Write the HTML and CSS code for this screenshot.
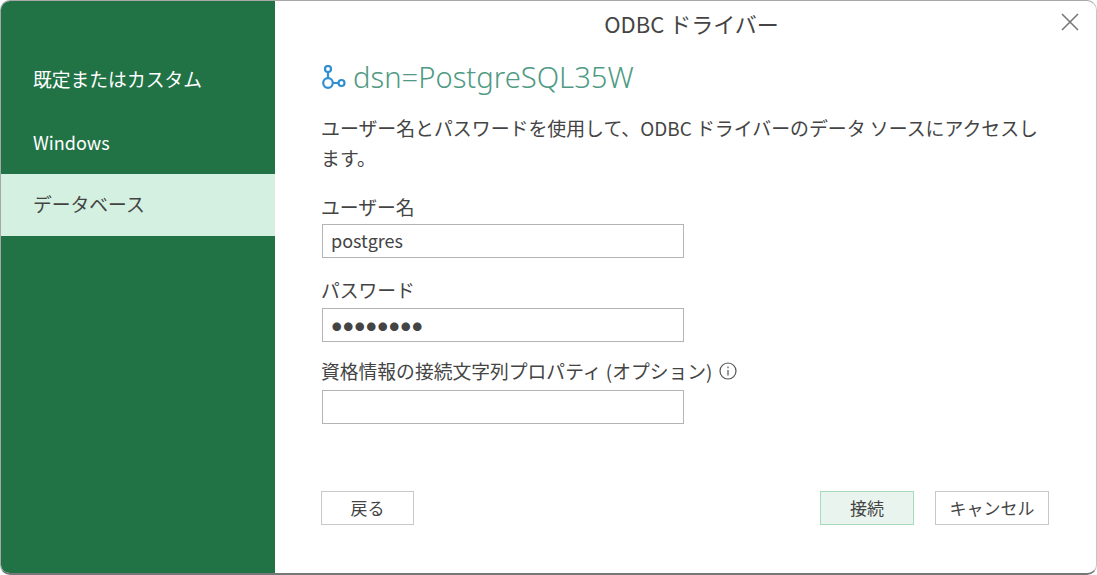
FILE: index.html
```html
<!DOCTYPE html>
<html lang="ja">
<head>
<meta charset="utf-8">
<title>ODBC ドライバー</title>
<link rel="stylesheet" href="styles.css">
</head>
<body>
<div class="dialog">
  <nav class="side">
    <div class="side-item">既定またはカスタム</div>
    <div class="side-item latin">Windows</div>
    <div class="side-item selected">データベース</div>
  </nav>
  <main class="main">
    <header class="titlebar">
      <span class="title">ODBC ドライバー</span>
      <svg class="close" width="18" height="18" viewBox="0 0 18 18"><path d="M1 1L17 17M17 1L1 17" stroke="#777" stroke-width="1.6" fill="none"/></svg>
    </header>
    <div class="content">
      <h1 class="heading">
        <svg class="node" width="24" height="25" viewBox="0 0 24 25" fill="none" stroke="#2f8fd0" stroke-width="2.2"><circle cx="6" cy="4" r="3"/><circle cx="6" cy="18" r="4.8"/><circle cx="19.5" cy="18" r="3"/><path d="M6 7V13.2M10.8 18H16.5"/></svg>
        <span>dsn=PostgreSQL35W</span>
      </h1>
      <p class="desc">ユーザー名とパスワードを使用して、ODBC ドライバーのデータ ソースにアクセスします。</p>
      <label class="label first">ユーザー名</label>
      <div class="input">postgres</div>
      <label class="label second">パスワード</label>
      <div class="input dots">●●●●●●●●</div>
      <label class="label third">資格情報の接続文字列プロパティ (オプション)
        <svg class="info" width="18" height="18" viewBox="0 0 18 18" fill="none" stroke="#555" stroke-width="1.2"><circle cx="9" cy="9" r="8"/><path d="M9 8V13.5M9 4.5V6.2"/></svg>
      </label>
      <div class="input"></div>
      <div class="buttons">
        <button class="btn back">戻る</button>
        <span class="spacer"></span>
        <button class="btn connect">接続</button>
        <button class="btn cancel">キャンセル</button>
      </div>
    </div>
  </main>
</div>
</body>
</html>
```
FILE: styles.css
```css
html, body {
  margin: 0;
  padding: 0;
  height: 100%;
  background: #fff;
  overflow: hidden;
}
body {
  font-family: "Noto Sans CJK JP", "Noto Sans", sans-serif;
  color: #444;
}
.dialog {
  box-sizing: border-box;
  width: 1097px;
  height: 575px;
  display: flex;
  border: 1px solid #a8a8a8;
  border-right-color: #c4c4c4;
  border-bottom: 2px solid #777;
  border-radius: 10px;
  overflow: hidden;
  background: #fff;
}
.side {
  width: 274px;
  flex: none;
  background: #217346;
  padding-top: 49px;
  box-sizing: border-box;
}
.side-item {
  box-sizing: border-box;
  height: 62px;
  padding-left: 32px;
  padding-bottom: 5px;
  display: flex;
  align-items: center;
  color: #fff;
  font-size: 18.8px;
}
.side-item.latin {
  font-size: 18px;
  padding-bottom: 2px;
}
.side-item.selected {
  background: #d4f0e0;
  color: #444;
  padding-bottom: 3px;
}
.main {
  flex: 1;
  display: flex;
  flex-direction: column;
}
.titlebar {
  position: relative;
  height: 47px;
  display: flex;
  justify-content: center;
  align-items: center;
  padding-left: 12px;
}
.title {
  font-size: 22px;
  color: #444;
  position: relative;
  top: -1.5px;
}
.close {
  position: absolute;
  right: 17px;
  top: 12px;
}
.content {
  flex: 1;
  padding: 0 47px;
  display: flex;
  flex-direction: column;
}
.heading {
  margin: 9px 0 0;
  height: 40px;
  display: flex;
  align-items: center;
  gap: 7px;
  font-family: "Noto Sans", sans-serif;
  font-size: 29.2px;
  font-weight: 300;
  color: #4f9a84;
}
.desc {
  margin: 16px 0 0 -1px;
  font-size: 18.9px;
  line-height: 30px;
  color: #444;
}
.label {
  font-size: 18.8px;
  line-height: 26px;
  color: #444;
  display: flex;
  align-items: center;
  gap: 7px;
  margin-left: -1px;
}
.label.first {
  margin-top: 21px;
  margin-bottom: 4px;
}
.label.second {
  margin-top: 19px;
  margin-bottom: 5px;
}
.label.third {
  margin-top: 16px;
  margin-bottom: 6px;
}
.input {
  box-sizing: border-box;
  width: 362px;
  height: 34px;
  border: 1.5px solid #b4b4b4;
  padding: 0 8px;
  font-size: 18px;
  line-height: 31px;
  color: #444;
  flex: none;
}
.dots {
  font-size: 9.5px;
  letter-spacing: 2px;
  line-height: 35px;
  padding-left: 9px;
}
.buttons {
  display: flex;
  margin-top: 67px;
  margin-left: -1px;
  width: 728px;
}
.spacer {
  flex: 1;
}
.btn {
  box-sizing: border-box;
  height: 34px;
  background: #fff;
  border: 1.5px solid #c8c8c8;
  font-family: inherit;
  font-size: 17px;
  color: #444;
  padding: 0 0 2px;
}
.back {
  width: 93px;
}
.connect {
  width: 94px;
  background: #e9f4ee;
  border-color: #a6dcbc;
}
.cancel {
  width: 114px;
  margin-left: 21px;
}
```
